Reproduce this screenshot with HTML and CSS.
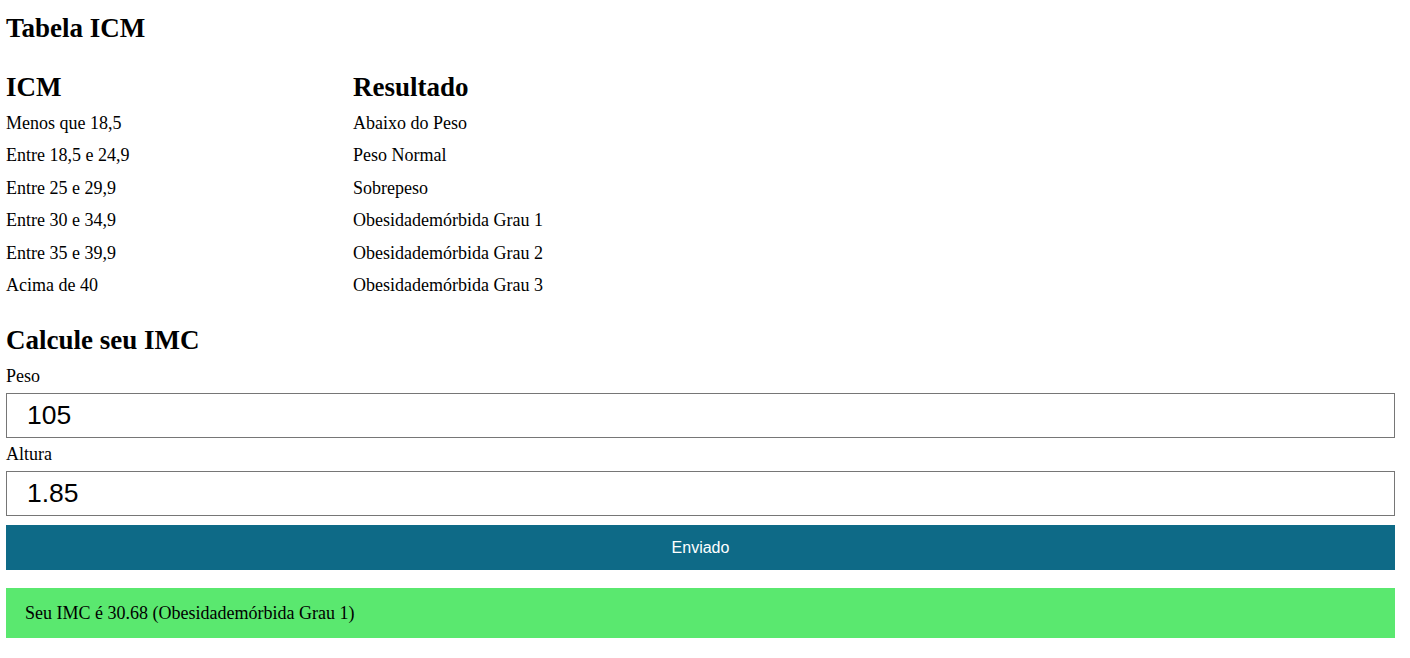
FILE: index.html
```html
<!DOCTYPE html>
<html lang="pt">
<head>
<meta charset="utf-8">
<title>Tabela ICM</title>
<link rel="stylesheet" href="styles.css">
</head>
<body>
<main class="page">
  <h1 class="title">Tabela ICM</h1>
  <div class="table">
    <div class="th">ICM</div><div class="th">Resultado</div>
    <div class="td">Menos que 18,5</div><div class="td">Abaixo do Peso</div>
    <div class="td">Entre 18,5 e 24,9</div><div class="td">Peso Normal</div>
    <div class="td">Entre 25 e 29,9</div><div class="td">Sobrepeso</div>
    <div class="td">Entre 30 e 34,9</div><div class="td">Obesidademórbida Grau 1</div>
    <div class="td">Entre 35 e 39,9</div><div class="td">Obesidademórbida Grau 2</div>
    <div class="td">Acima de 40</div><div class="td">Obesidademórbida Grau 3</div>
  </div>
  <h2 class="title calc">Calcule seu IMC</h2>
  <form class="form">
    <label class="label" for="peso">Peso</label>
    <input class="input" id="peso" type="text" value="105">
    <label class="label" for="altura">Altura</label>
    <input class="input" id="altura" type="text" value="1.85">
    <button class="btn" type="button">Enviado</button>
  </form>
  <div class="result">Seu IMC é 30.68 (Obesidademórbida Grau 1)</div>
</main>
</body>
</html>
```
FILE: styles.css
```css
html, body {
  margin: 0;
  padding: 0;
  background: #fff;
}
body {
  font-family: "Liberation Serif", "Times New Roman", serif;
  font-size: 18px;
  color: #000;
}
.page {
  padding: 14px 15px 0 6px;
}
.title {
  margin: 0;
  font-size: 27px;
  font-weight: bold;
  line-height: 28px;
}
.table {
  display: grid;
  grid-template-columns: 347px 1fr;
  margin-top: 31px;
}
.th {
  font-size: 27px;
  font-weight: bold;
  line-height: 28px;
  margin-bottom: 6px;
}
.td {
  line-height: 32.4px;
  height: 32.4px;
}
.calc {
  margin-top: 25px;
}
.form {
  display: flex;
  flex-direction: column;
  margin-top: 12px;
}
.label {
  line-height: 20px;
  margin-bottom: 6px;
}
.input {
  box-sizing: border-box;
  height: 45px;
  border: 1px solid #767676;
  padding: 0 20px;
  font-family: "Liberation Sans", Arial, sans-serif;
  font-size: 26.5px;
  color: #000;
  margin: 0 0 6px;
  outline: none;
}
.label + .input {
  margin-top: 1px;
}
.btn {
  height: 45px;
  margin-top: 3px;
  border: none;
  background: #0e6a87;
  color: #fff;
  font-family: "Liberation Sans", Arial, sans-serif;
  font-size: 16px;
}
.result {
  margin-top: 18px;
  height: 50px;
  display: flex;
  align-items: center;
  padding-left: 19px;
  background: #5ae86f;
}
```
